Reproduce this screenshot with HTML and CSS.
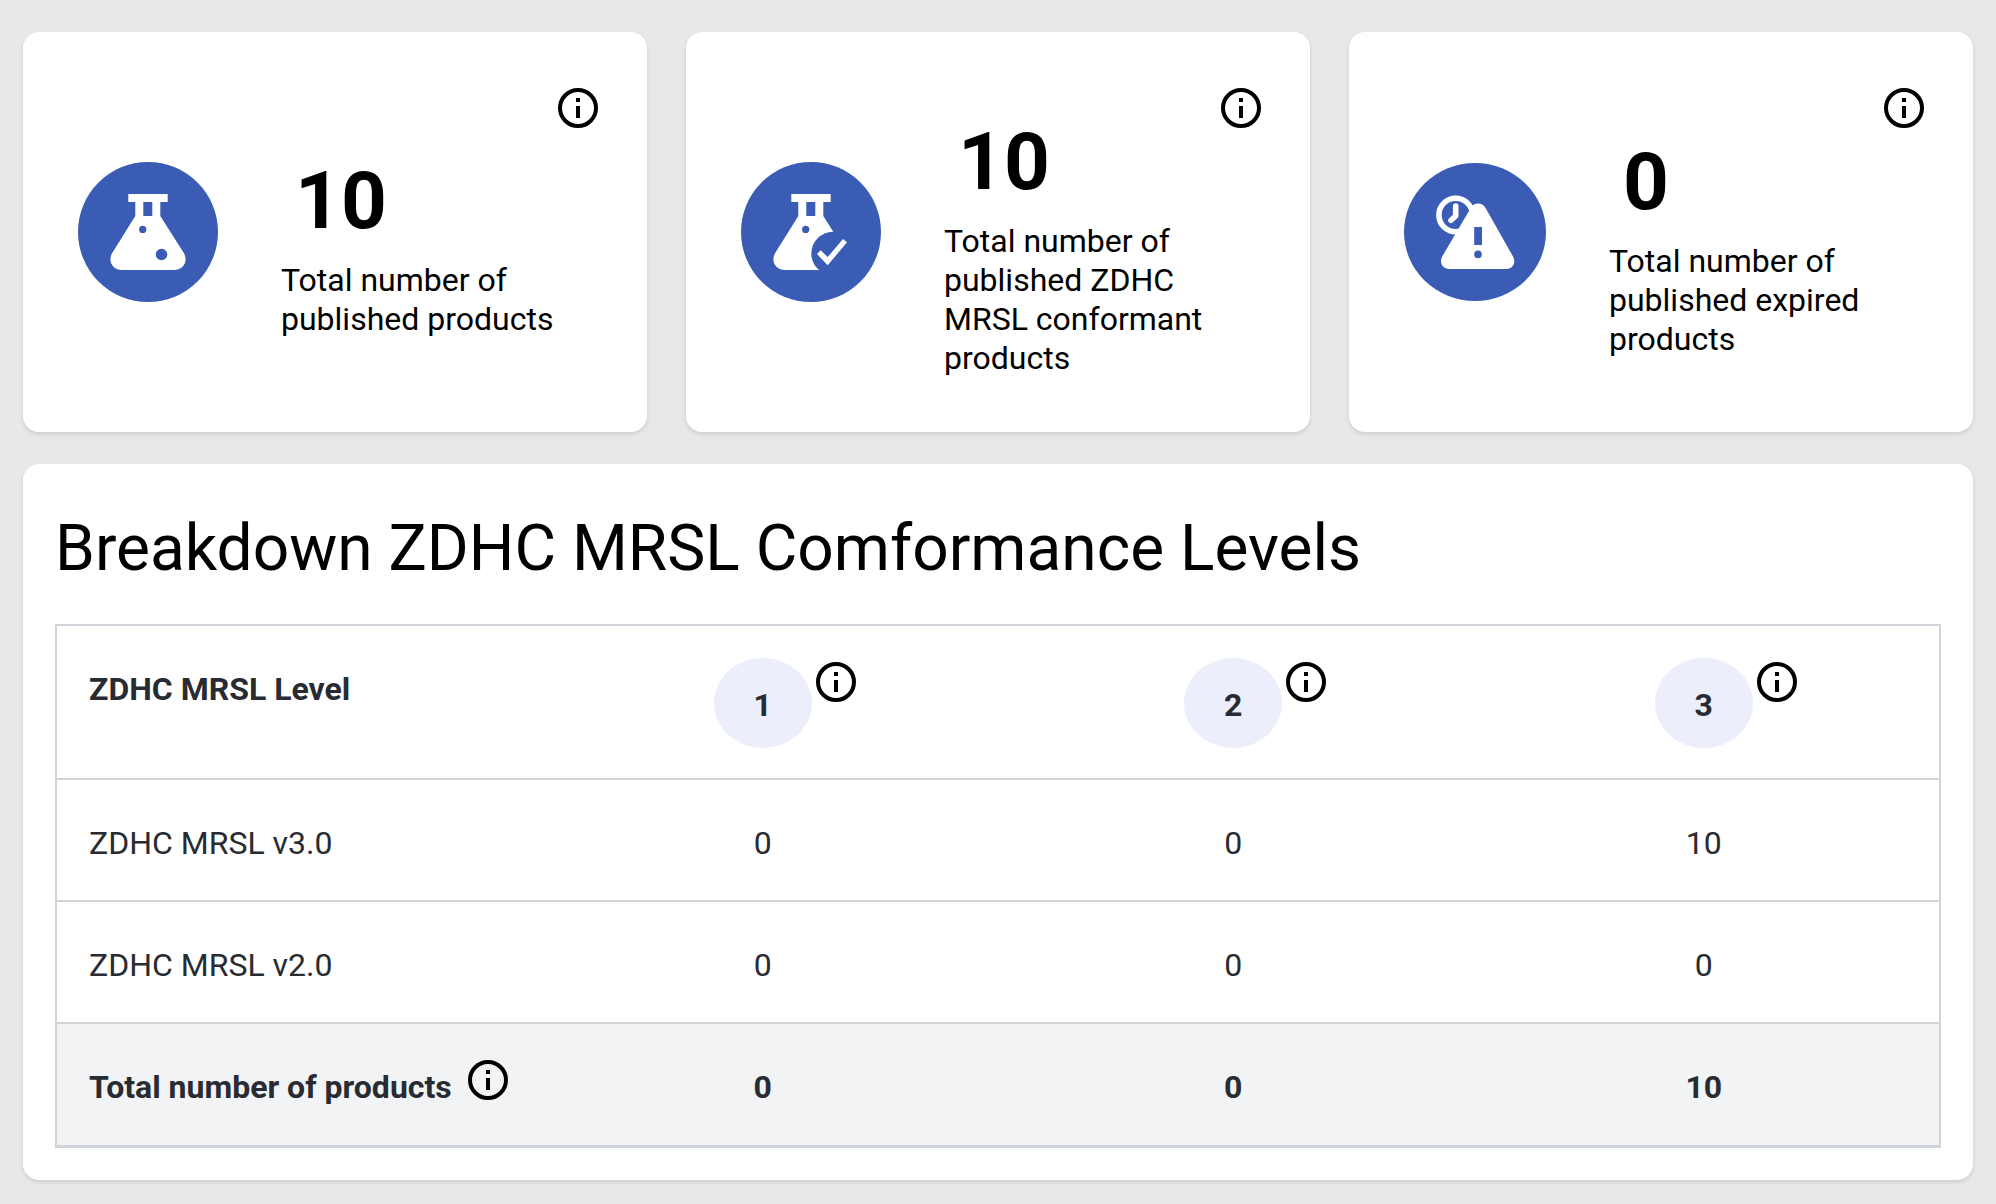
FILE: index.html
```html
<!DOCTYPE html>
<html lang="en">
<head>
<meta charset="utf-8">
<meta name="viewport" content="width=device-width, initial-scale=1">
<title>ZDHC MRSL Conformance</title>
<link rel="stylesheet" href="styles.css">
</head>
<body>
<svg class="sprite" aria-hidden="true">
  <symbol id="info" viewBox="0 0 24 24">
    <circle cx="12" cy="12" r="9" fill="none" stroke="currentColor" stroke-width="2"/>
    <path fill="currentColor" d="M11 7h2v2h-2zM11 11h2v6h-2z"/>
  </symbol>
</svg>
<main class="dashboard">
  <section class="cards" aria-label="Summary">
    <article class="card">
      <div class="card-body">
        <svg class="card-icon" width="140" height="140" viewBox="0 0 140 140" aria-hidden="true">
          <circle class="blue" cx="70" cy="70" r="70"/>
          <path class="white" d="M50.3 32H89.7V40H82.3V54L105.5 90.5C111 99 105 108 96 108H44C35 108 29 99 34.5 90.5L57.3 54V40H50.3Z"/>
          <rect class="blue" x="65.3" y="40" width="9" height="14"/>
          <circle class="blue" cx="64.7" cy="67.4" r="3.6"/>
          <circle class="blue" cx="83.5" cy="92.5" r="5.8"/>
        </svg>
        <div class="card-text">
          <p class="card-number">10</p>
          <p class="card-label">Total number of published products</p>
        </div>
      </div>
      <button class="info" type="button" aria-label="About published products"><svg width="48" height="48"><use href="#info"/></svg></button>
    </article>
    <article class="card">
      <div class="card-body">
        <svg class="card-icon" width="140" height="140" viewBox="0 0 140 140" aria-hidden="true">
          <circle class="blue" cx="70" cy="70" r="70"/>
          <path class="white" d="M50.3 32H89.7V40H82.3V54L105.5 90.5C111 99 105 108 96 108H44C35 108 29 99 34.5 90.5L57.3 54V40H50.3Z"/>
          <rect class="blue" x="65.3" y="40" width="9" height="14"/>
          <circle class="blue" cx="64.7" cy="67.4" r="3.6"/>
          <circle class="blue" cx="92" cy="91.5" r="21.7"/>
          <path class="white" d="M76 92L79.7 88.3L86.7 95L102 77L106 80.3L86.7 103.3Z"/>
        </svg>
        <div class="card-text">
          <p class="card-number">10</p>
          <p class="card-label">Total number of published ZDHC MRSL conformant products</p>
        </div>
      </div>
      <button class="info" type="button" aria-label="About conformant products"><svg width="48" height="48"><use href="#info"/></svg></button>
    </article>
    <article class="card">
      <div class="card-body">
        <svg class="card-icon" width="142" height="138" viewBox="0 0 142 138" aria-hidden="true">
          <ellipse class="blue" cx="71" cy="69" rx="71" ry="69"/>
          <circle cx="51.7" cy="52" r="16.8" fill="none" stroke="#fff" stroke-width="5.6"/>
          <path d="M51.7 43V53L47 57.3" fill="none" stroke="#fff" stroke-width="5.6" stroke-linecap="round" stroke-linejoin="round"/>
          <path class="white" d="M67 44.5C70 39 78 39 81.3 44.5L109 93.5C112.5 100 108.5 106 102.5 106H45C38.5 106 35 99.5 38.2 93.5Z"/>
          <rect class="blue" x="70.2" y="64" width="7.8" height="18"/>
          <circle class="blue" cx="74" cy="91.4" r="3.8"/>
        </svg>
        <div class="card-text">
          <p class="card-number">0</p>
          <p class="card-label">Total number of published expired products</p>
        </div>
      </div>
      <button class="info" type="button" aria-label="About expired products"><svg width="48" height="48"><use href="#info"/></svg></button>
    </article>
  </section>

  <section class="panel">
    <h2 class="panel-title">Breakdown ZDHC MRSL Comformance Levels</h2>
    <table class="levels">
      <thead>
        <tr>
          <th scope="col">ZDHC MRSL Level</th>
          <th scope="col"><div class="level"><span class="badge">1</span><button class="info" type="button" aria-label="About level 1"><svg width="48" height="48"><use href="#info"/></svg></button></div></th>
          <th scope="col"><div class="level"><span class="badge">2</span><button class="info" type="button" aria-label="About level 2"><svg width="48" height="48"><use href="#info"/></svg></button></div></th>
          <th scope="col"><div class="level"><span class="badge">3</span><button class="info" type="button" aria-label="About level 3"><svg width="48" height="48"><use href="#info"/></svg></button></div></th>
        </tr>
      </thead>
      <tbody>
        <tr><th scope="row">ZDHC MRSL v3.0</th><td>0</td><td>0</td><td>10</td></tr>
        <tr><th scope="row">ZDHC MRSL v2.0</th><td>0</td><td>0</td><td>0</td></tr>
      </tbody>
      <tfoot>
        <tr><th scope="row">Total number of products<button class="info" type="button" aria-label="About the total"><svg width="48" height="48"><use href="#info"/></svg></button></th><td>0</td><td>0</td><td>10</td></tr>
      </tfoot>
    </table>
  </section>
</main>
</body>
</html>
```
FILE: styles.css
```css
* { box-sizing: border-box; }

body {
  margin: 0;
  background: #e8e8e8;
  color: #000;
  font-family: Roboto, "Liberation Sans", sans-serif;
  font-size: 32px;
  line-height: 39px;
}

.sprite { display: none; }
.blue { fill: #3a5cb5; }
.white { fill: #fff; }

.dashboard {
  display: flex;
  flex-direction: column;
  gap: 32px;
  padding: 32px 23px 24px;
}

.cards {
  display: grid;
  grid-template-columns: repeat(3, 1fr);
  gap: 39px;
}

.card,
.panel {
  background: #fff;
  border-radius: 16px;
  box-shadow: 0 2px 4px rgba(0, 0, 0, 0.12);
}

.card {
  display: grid;
  min-height: 400px;
}

/* The body and the info button share one grid cell. */
.card-body,
.card > .info { grid-area: 1 / 1; }

.card-body {
  display: flex;
  align-items: center;
  gap: 63px;
  padding: 52px 64px 52px 55px;
}

.card > .info {
  place-self: start end;
  margin: 52px 45px 0 0;
}

.card-icon { flex: none; }

.card-number {
  margin: 0;
  padding: 28px 14px 12px;
  font-size: 80px;
  font-weight: 700;
  line-height: 96px;
}

.card-label { margin: 0; }

.info {
  width: 48px;
  height: 48px;
  padding: 0;
  border: 0;
  background: none;
  color: #000;
  vertical-align: top;
  cursor: pointer;
}

.info svg { display: block; }

.panel { padding: 32px; }

.panel-title {
  margin: 14px 0 37px;
  font-size: 64px;
  font-weight: 400;
  line-height: 77px;
}

.levels {
  width: 100%;
  table-layout: fixed;
  border: 2px solid #ced4da;
  border-bottom-width: 3px;
  border-spacing: 0;
  color: #282b31;
  line-height: 62px;
}

.levels th,
.levels td {
  padding: 32px 32px 26px;
  text-align: center;
  vertical-align: top;
}

.levels th:first-child {
  padding-right: 0;
  text-align: left;
}

.levels thead th,
.levels tbody th,
.levels tbody td { border-bottom: 2px solid #d0d4d8; }

.levels tbody th { font-weight: 400; }

.levels tfoot th,
.levels tfoot td {
  padding-bottom: 27px;
  background: #f1f3f5;
  font-weight: 700;
}

.levels tfoot .info { margin-left: 12px; }

.level {
  display: flex;
  justify-content: center;
  margin-bottom: 4px;
}

/* Keeps the badge centred in its column with the button beside it. */
.level .info { margin-right: -48px; }

.badge {
  padding: 16px 40px 12px;
  border-radius: 50%;
  background: #edeefc;
}
```
